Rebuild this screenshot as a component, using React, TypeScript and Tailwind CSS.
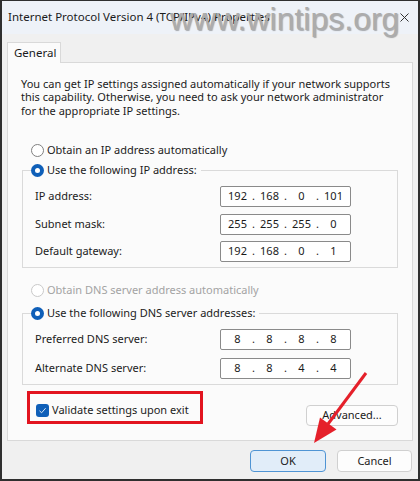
import { Fragment } from "react";

function Radio({ state }: { state: "on" | "off" | "disabled" }) {
  if (state === "on") {
    return (
      <span className="w-[13px] h-[13px] rounded-full bg-[#0f5fb8] flex items-center justify-center shrink-0">
        <span className="w-[5px] h-[5px] rounded-full bg-white" />
      </span>
    );
  }
  if (state === "disabled") {
    return <span className="w-[13px] h-[13px] rounded-full border border-[#c9c9c9] bg-white shrink-0" />;
  }
  return <span className="w-[13px] h-[13px] rounded-full border border-[#808080] bg-white shrink-0" />;
}

function IpBox({ parts }: { parts: string[] }) {
  return (
    <div className="w-[131px] h-[21px] border border-[#8a8a8a] rounded-[2px] bg-white flex items-center pl-[3.5px] text-[#1a1a1a]">
      {parts.map((p, i) => (
        <Fragment key={i}>
          {i > 0 && <span className="w-[6px] text-center">.</span>}
          <span className="w-[26px] text-center">{p}</span>
        </Fragment>
      ))}
    </div>
  );
}

function FieldRow({ label, parts }: { label: string; parts: string[] }) {
  return (
    <div className="h-[21px] flex items-center pl-[4px]">
      <span className="w-[185px] shrink-0">{label}</span>
      <IpBox parts={parts} />
    </div>
  );
}

export default function App() {
  return (
    <div className="relative w-[420px] h-[481px] font-['Noto_Sans',sans-serif] text-[11px] text-[#1b1b1b]">
      <div className="w-[420px] h-[481px] border-2 border-t border-[#2f2f2f] bg-[#f0f0f0] flex flex-col">
        {/* title bar */}
        <div className="h-[33px] shrink-0 bg-[#eef2f8] flex items-center pl-[6px] pb-[1px] text-[11.5px] relative">
          <span>Internet Protocol Version 4 (TCP/IPv4) Properties</span>
          <svg className="absolute right-[9px] top-[12px]" width="9" height="9" viewBox="0 0 9 9">
            <path d="M0.5 0.5 L8.5 8.5 M8.5 0.5 L0.5 8.5" stroke="#333" strokeWidth="1" />
          </svg>
        </div>

        {/* tab */}
        <div className="mt-[8px] ml-[5px] w-[54px] h-[21px] -mb-px relative z-10 bg-[#fbfbfb] border border-b-0 border-[#d9d9d9] flex items-center pl-[6px] text-[11.5px]">
          General
        </div>

        {/* panel */}
        <div className="ml-[5px] w-[406px] h-[379px] shrink-0 border border-[#d9d9d9] bg-[#fbfbfb] flex flex-col">
          <p className="mt-[13.5px] pl-[13px] leading-[13.5px] whitespace-nowrap">
            You can get IP settings assigned automatically if your network supports
            <br />
            this capability. Otherwise, you need to ask your network administrator
            <br />
            for the appropriate IP settings.
          </p>

          <div className="mt-[25px] h-[16px] pl-[23px] flex items-center gap-[3px]">
            <Radio state="off" />
            <span>Obtain an IP address automatically</span>
          </div>

          <fieldset className="mt-[4px] mx-[14px] border border-[#dadada] px-[8px] pt-[8px] pb-[5px]">
            <legend className="pr-[4px]">
              <div className="h-[16px] flex items-center gap-[3px]">
                <Radio state="on" />
                <span>Use the following IP address:</span>
              </div>
            </legend>
            <div className="flex flex-col gap-[6.5px]">
              <FieldRow label="IP address:" parts={["192", "168", "0", "101"]} />
              <FieldRow label="Subnet mask:" parts={["255", "255", "255", "0"]} />
              <FieldRow label="Default gateway:" parts={["192", "168", "0", "1"]} />
            </div>
          </fieldset>

          <div className="mt-[14px] h-[16px] pl-[23px] flex items-center gap-[3px] text-[#a3a3a3]">
            <Radio state="disabled" />
            <span>Obtain DNS server address automatically</span>
          </div>

          <fieldset className="mt-[7px] mx-[14px] border border-[#dadada] px-[8px] pt-[8px] pb-[5px]">
            <legend className="pr-[4px]">
              <div className="h-[16px] flex items-center gap-[3px]">
                <Radio state="on" />
                <span>Use the following DNS server addresses:</span>
              </div>
            </legend>
            <div className="flex flex-col gap-[7.5px]">
              <FieldRow label="Preferred DNS server:" parts={["8", "8", "8", "8"]} />
              <FieldRow label="Alternate DNS server:" parts={["8", "8", "4", "4"]} />
            </div>
          </fieldset>

          <div className="flex items-start">
            <div className="mt-[6px] ml-[19px] w-[176px] h-[33px] border-[3px] border-[#e2141f] flex items-center gap-[3px] pl-[6px] pt-[6px]">
              <span className="w-[13px] h-[13px] rounded-[3px] bg-[#0f5fb8] flex items-center justify-center shrink-0">
                <svg width="9" height="9" viewBox="0 0 9 9">
                  <path d="M1.5 4.8 L3.6 6.8 L7.6 2.2" fill="none" stroke="#dbe8f7" strokeWidth="1" />
                </svg>
              </span>
              <span className="whitespace-nowrap">Validate settings upon exit</span>
            </div>
            <button className="mt-[20px] ml-auto mr-[14px] w-[92px] h-[21px] rounded-[4px] border border-[#d0d0d0] bg-[#fdfdfd] flex items-center justify-center">
              Advanced...
            </button>
          </div>
        </div>

        {/* dialog buttons */}
        <div className="mt-[9px] pr-[6px] flex justify-end gap-[11px]">
          <button className="w-[76px] h-[22px] rounded-[4px] border border-[#4f94d4] bg-[#e1edf9] flex items-center justify-center">
            OK
          </button>
          <button className="w-[75px] h-[22px] rounded-[4px] border border-[#d0d0d0] bg-[#fdfdfd] flex items-center justify-center">
            Cancel
          </button>
        </div>
      </div>

      {/* watermark */}
      <div className="absolute left-[170px] top-[3px] leading-none text-[32px] font-['Liberation_Sans',sans-serif] text-[#acacac] [text-shadow:1px_1px_1px_rgba(0,0,0,0.3)] pointer-events-none whitespace-nowrap">
        www.wintips.org
      </div>

      {/* red arrow */}
      <svg className="absolute left-0 top-0 pointer-events-none" width="420" height="481" viewBox="0 0 420 481">
        <line x1="366" y1="373" x2="328" y2="424" stroke="#e5202a" strokeWidth="3" />
        <polygon points="314,443 320,417.5 336.5,429.5" fill="#e5202a" />
      </svg>
    </div>
  );
}
